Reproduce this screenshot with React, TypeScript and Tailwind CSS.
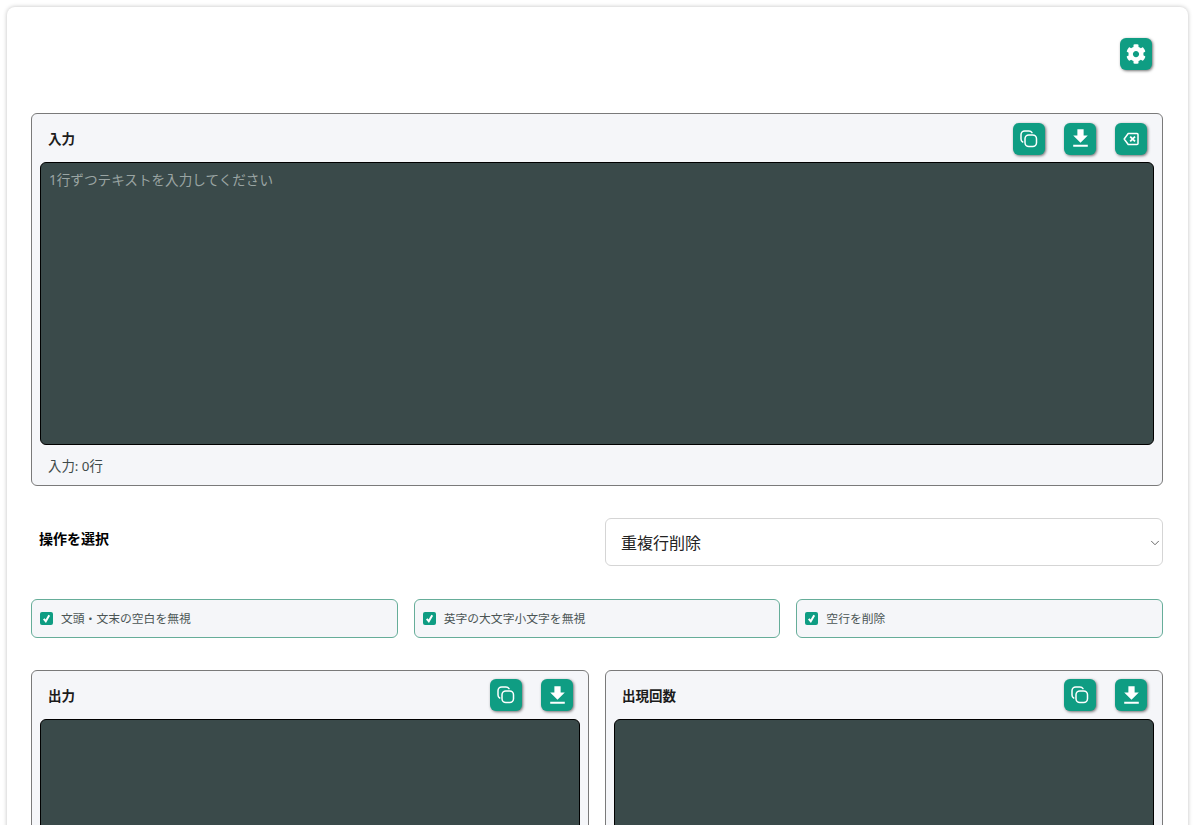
import { FaCog } from "react-icons/fa";
import { MdFileDownload } from "react-icons/md";
import { ChevronDown } from "lucide-react";

const CopyIcon = () => (
    <svg viewBox="0.5 0.5 20 20" className="w-5 h-5" fill="none" stroke="currentColor" strokeWidth={1.5}>
        <rect x="6.5" y="6.5" width="11.5" height="11.5" rx="3.8" />
        <path d="M13.5 4.2A3.6 3.6 0 0 0 10.4 2.5H6.2A3.7 3.7 0 0 0 2.5 6.2v4.2a3.6 3.6 0 0 0 1.7 3.1" strokeLinecap="round" />
    </svg>
);

const BackspaceIcon = () => (
    <svg viewBox="0 0 16 14" className="w-4 h-[14px]" fill="none" stroke="currentColor">
        <path d="M5.2 1.5H14a1 1 0 0 1 1 1v9a1 1 0 0 1-1 1H5.2L1.2 7z" strokeWidth={1.5} strokeLinejoin="round" />
        <path d="M7.2 4.6l4.8 4.8M12 4.6l-4.8 4.8" strokeWidth={1.8} />
    </svg>
);

const IconButton = ({ children }: { children: React.ReactNode }) => (
    <button
        type="button"
        className="w-8 h-8 flex items-center justify-center rounded-md bg-[#0f9d83] text-white shadow-[1px_1px_3px_rgba(0,0,0,0.55)]"
    >
        {children}
    </button>
);

const CopyButton = () => (
    <IconButton>
        <CopyIcon />
    </IconButton>
);

const DownloadButton = () => (
    <IconButton>
        <MdFileDownload size={25} />
    </IconButton>
);

const ClearButton = () => (
    <IconButton>
        <BackspaceIcon />
    </IconButton>
);

const Panel = ({
    title,
    actions,
    placeholder,
    footer,
}: {
    title: string;
    actions: React.ReactNode;
    placeholder?: string;
    footer?: string;
}) => (
    <div className="rounded-md border border-[#7a7a7a] bg-[#f5f6f9]">
        <div className="flex items-center justify-between h-12 pt-px pl-4 pr-[15px]">
            <span className="mt-[2px] text-[13.5px] font-bold text-[#1c1c1c]">{title}</span>
            <div className="flex items-center gap-[19px]">{actions}</div>
        </div>
        <div className="px-2">
            <textarea
                placeholder={placeholder}
                className="block w-full h-[283px] resize-none rounded-md border border-black bg-[#3a4a4a] px-2 py-2 text-[13.6px] leading-[17px] text-white placeholder:text-[#9aa5a3]"
            />
        </div>
        {footer && <div className="h-10 pt-[2px] pl-4 flex items-center text-[13.4px] text-[#3f4a4a]">{footer}</div>}
    </div>
);

const OptionCheck = ({ label }: { label: string }) => (
    <label className="flex items-center gap-2 h-[38.5px] rounded-md border border-[#66ad99] bg-[#f5f6f9] pl-2 text-[11.8px] text-[#4b5555]">
        <span className="w-[13px] h-[13px] flex items-center justify-center rounded-[2px] bg-[#0f9d83] text-white">
            <svg viewBox="0 0 12 12" className="w-[11px] h-[11px]" fill="none" stroke="currentColor" strokeWidth={2.2}>
                <path d="M3 6.5l2.2 2.5L9 2.5" />
            </svg>
        </span>
        <span className="mt-[2px]">{label}</span>
    </label>
);

export default function App() {
    return (
        <div className="h-screen overflow-hidden bg-white pt-[7px] pl-[7px] font-['Noto_Sans','Noto_Sans_CJK_JP',sans-serif]">
            <div className="w-[1181px] min-h-[900px] rounded-lg bg-white pl-6 pr-[25px] shadow-[0_0_4px_rgba(0,0,0,0.25)]">
                <div className="flex justify-end pt-[31px] pr-[11px] pb-[43px]">
                    <IconButton>
                        <FaCog size={20} />
                    </IconButton>
                </div>

                <Panel
                    title="入力"
                    placeholder="1行ずつテキストを入力してください"
                    footer="入力: 0行"
                    actions={
                        <>
                            <CopyButton />
                            <DownloadButton />
                            <ClearButton />
                        </>
                    }
                />

                <div className="mt-8 grid grid-cols-2 gap-4 items-center">
                    <span className="pl-2 pb-1.5 text-sm font-bold text-black">操作を選択</span>
                    <div className="relative">
                        <select className="block w-full h-12 appearance-none rounded-md border border-[#d5d5d5] bg-white pt-[2px] pl-[15px] text-base text-[#222]">
                            <option>重複行削除</option>
                        </select>
                        <ChevronDown size={14} strokeWidth={1.5} className="absolute right-px top-[18px] text-[#555]" />
                    </div>
                </div>

                <div className="mt-[33px] grid grid-cols-3 gap-4">
                    <OptionCheck label="文頭・文末の空白を無視" />
                    <OptionCheck label="英字の大文字小文字を無視" />
                    <OptionCheck label="空行を削除" />
                </div>

                <div className="mt-8 grid grid-cols-2 gap-4">
                    <Panel
                        title="出力"
                        actions={
                            <>
                                <CopyButton />
                                <DownloadButton />
                            </>
                        }
                    />
                    <Panel
                        title="出現回数"
                        actions={
                            <>
                                <CopyButton />
                                <DownloadButton />
                            </>
                        }
                    />
                </div>
            </div>
        </div>
    );
}
